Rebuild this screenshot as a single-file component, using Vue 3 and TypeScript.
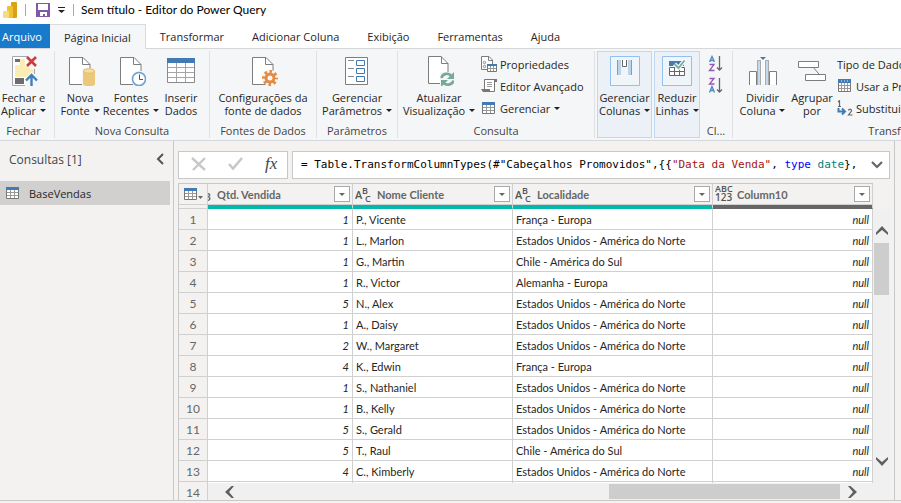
<script setup lang="ts">
import { ref } from 'vue'

interface Sale {
  qty: number
  client: string
  place: string
}

const tabs = ['Página Inicial', 'Transformar', 'Adicionar Coluna', 'Exibição', 'Ferramentas', 'Ajuda']
const activeTab = ref('Página Inicial')

const formula = [
  { text: '= Table.TransformColumnTypes(#"Cabeçalhos Promovidos",{{', kind: 'plain-code' },
  { text: '"Data da Venda"', kind: 'str' },
  { text: ', ', kind: 'plain-code' },
  { text: 'type', kind: 'kw' },
  { text: ' ', kind: 'plain-code' },
  { text: 'date', kind: 'ty' },
  { text: '},', kind: 'plain-code' },
]

const usa = 'Estados Unidos - América do Norte'
const sales: Sale[] = [
  { qty: 1, client: 'P., Vicente', place: 'França - Europa' },
  { qty: 1, client: 'L., Marlon', place: usa },
  { qty: 1, client: 'G., Martin', place: 'Chile - América do Sul' },
  { qty: 1, client: 'R., Victor', place: 'Alemanha - Europa' },
  { qty: 5, client: 'N., Alex', place: usa },
  { qty: 1, client: 'A., Daisy', place: usa },
  { qty: 2, client: 'W., Margaret', place: usa },
  { qty: 4, client: 'K., Edwin', place: 'França - Europa' },
  { qty: 1, client: 'S., Nathaniel', place: usa },
  { qty: 1, client: 'B., Kelly', place: usa },
  { qty: 5, client: 'S., Gerald', place: usa },
  { qty: 5, client: 'T., Raul', place: 'Chile - América do Sul' },
  { qty: 4, client: 'C., Kimberly', place: usa },
]

const columns = [
  { name: 'Qtd. Vendida', type: 'number' },
  { name: 'Nome Cliente', type: 'text' },
  { name: 'Localidade', type: 'text' },
  { name: 'Column10', type: 'any' },
]
</script>

<template>
  <div class="window">
    <header class="titlebar">
      <svg class="logo" width="18" height="18" viewBox="0 0 18 18" aria-hidden="true">
        <rect x="11" y="1" width="6" height="16" rx="1" fill="#d9a116" />
        <rect x="7" y="5" width="6" height="12" rx="1" fill="#efc32f" />
        <rect x="3" y="10" width="6" height="7" rx="1" fill="#f8dc7c" />
      </svg>
      <i class="bar"></i>
      <button class="plain save" aria-label="Salvar">
        <svg width="14" height="14" viewBox="0 0 14 14">
          <path d="M0 0H14V14H0Z" fill="#8357a8" />
          <path d="M2 1H12V7H2ZM4 9H11V13H9V11H7V13H4Z" fill="#fff" />
        </svg>
      </button>
      <button class="plain more" aria-label="Personalizar">
        <svg width="7" height="6" viewBox="0 0 7 6"><path d="M0 0H7V1H0ZM0 3H7L3.500 6Z" fill="#222" /></svg>
      </button>
      <i class="bar"></i>
      <h1>Sem título - Editor do Power Query</h1>
    </header>

    <nav class="tabs">
      <button class="file">Arquivo</button>
      <button
        v-for="tab in tabs"
        :key="tab"
        :class="{ active: tab === activeTab }"
        @click="activeTab = tab"
      >{{ tab }}</button>
    </nav>

    <section class="ribbon">
      <div class="group g-close">
        <div class="tools">
          <button class="big">
            <svg width="30" height="30" viewBox="0 0 30 30">
              <path d="M20 .5H4.500V29.500H17" fill="#fff" stroke="#a8a8a8" />
              <path d="M7 9H12V21H7ZM12 3H17V21H12Z" fill="#fbedb4" />
              <path d="M7 3H12V6H7ZM7 22H16V28H7Z" fill="#6d6d6d" />
              <path d="M17 10L26 14V21H17Z" fill="#fbedb4" />
              <path d="M26.500 13V18" stroke="#a8a8a8" />
              <path d="M19 1L28 10M28 1L19 10" stroke="#cf3a3a" stroke-width="2.600" />
              <path d="M23.500 30V20M18 24.500L23.500 19L29 24.500" fill="none" stroke="#f5f6f7" stroke-width="4.500" />
              <path d="M23.500 30V20M18 24.500L23.500 19L29 24.500" fill="none" stroke="#427fbd" stroke-width="2.400" />
            </svg>
            <span>Fechar e</span><span>Aplicar <b class="caret"></b></span>
          </button>
        </div>
        <p>Fechar</p>
      </div>

      <div class="group g-new">
        <div class="tools">
          <button class="big w46">
            <svg width="30" height="30" viewBox="0 0 30 30">
              <path d="M4.500 1.500H18L25 8.500V28.500H4.500Z" fill="#fff" stroke="#7d7d7d" />
              <path d="M17.500 1.500V8.500H25" fill="none" stroke="#7d7d7d" />
              <path d="M17 12H30V30H17Z" fill="#f5f6f7" />
              <path d="M18 15V28C18 31 30 31 30 28V15Z" fill="#ecc87a" />
              <ellipse cx="24" cy="15" rx="5.500" ry="2.300" fill="#f4dca6" stroke="#e7bd66" />
            </svg>
            <span>Nova</span><span>Fonte <b class="caret"></b></span>
          </button>
          <button class="big w56">
            <svg width="30" height="30" viewBox="0 0 30 30">
              <path d="M4.500 1.500H18L25 8.500V28.500H4.500Z" fill="#fff" stroke="#7d7d7d" />
              <path d="M17.500 1.500V8.500H25" fill="none" stroke="#7d7d7d" />
              <circle cx="23" cy="23" r="8.200" fill="#f5f6f7" />
              <circle cx="23" cy="23" r="6.500" fill="#fff" stroke="#6c9fd2" stroke-width="1.500" />
              <path d="M23.500 18.500V23.500H27" fill="none" stroke="#555" />
            </svg>
            <span>Fontes</span><span>Recentes <b class="caret"></b></span>
          </button>
          <button class="big w44">
            <svg width="30" height="30" viewBox="0 0 30 30">
              <path d="M1.500 2.500H28.500V26.500H1.500Z" fill="#fff" stroke="#8a8a8a" />
              <path d="M10.500 7V26M19.500 7V26M2 11.500H28M2 16.500H28M2 21.500H28" stroke="#a5a5a5" />
              <path d="M1 2H29V7H1Z" fill="#427ab5" />
            </svg>
            <span>Inserir</span><span>Dados</span>
          </button>
        </div>
        <p>Nova Consulta</p>
      </div>

      <div class="group g-source">
        <div class="tools">
          <button class="big">
            <svg width="30" height="30" viewBox="0 0 30 30">
              <path d="M4.500 1.500H18L25 8.500V28.500H4.500Z" fill="#fff" stroke="#7d7d7d" />
              <path d="M17.500 1.500V8.500H25" fill="none" stroke="#7d7d7d" />
              <circle cx="22" cy="22" r="8" fill="#f5f6f7" />
              <circle cx="22" cy="22" r="4" fill="none" stroke="#e58a42" stroke-width="3" />
              <circle cx="22" cy="22" r="6.500" fill="none" stroke="#e58a42" stroke-width="3" stroke-dasharray="2.500 2.605" stroke-dashoffset="1.250" />
            </svg>
            <span>Configurações da</span><span>fonte de dados</span>
          </button>
        </div>
        <p>Fontes de Dados</p>
      </div>

      <div class="group g-param">
        <div class="tools">
          <button class="big">
            <svg width="30" height="30" viewBox="0 0 30 30">
              <path d="M3.500 1.500H25.500V28.500H3.500Z" fill="#fff" stroke="#7d7d7d" />
              <path d="M6 4.500H12M6 12.500H12M6 20.500H12" stroke="#8a8a8a" />
              <path d="M14.500 4.500H22.500V9.500H14.500ZM14.500 12.500H22.500V17.500H14.500ZM14.500 20.500H22.500V25.500H14.500Z" fill="none" stroke="#427ab5" />
            </svg>
            <span>Gerenciar</span><span>Parâmetros <b class="caret"></b></span>
          </button>
        </div>
        <p>Parâmetros</p>
      </div>

      <div class="group g-query">
        <div class="tools">
          <button class="big w78">
            <svg width="30" height="30" viewBox="0 0 30 30">
              <path d="M4.500 .5H17L24 7.500V27.500H4.500Z" fill="#fff" stroke="#7d7d7d" />
              <path d="M17.500 .5V7.500H24" fill="none" stroke="#7d7d7d" />
              <path d="M16 16H30V30H16Z" fill="#f5f6f7" />
              <path d="M17.500 22C18.500 17 25 16.500 27.500 20.500M29.500 24.500C28.500 29.500 21.500 30 19 26" fill="none" stroke="#78a897" stroke-width="2.600" />
              <path d="M30 16V23H23ZM17 31V24H24Z" fill="#78a897" />
            </svg>
            <span>Atualizar</span><span>Visualização <b class="caret"></b></span>
          </button>
          <div class="stack">
            <button class="small">
              <svg width="16" height="16" viewBox="0 0 16 16">
                <path d="M.5 .5H8L11.500 4V13.500H.5Z" fill="#fff" stroke="#7d7d7d" />
                <path d="M7.500 .5V4.500H11" fill="none" stroke="#7d7d7d" />
                <circle cx="3.500" cy="6.500" r="1.200" fill="none" stroke="#888" /><circle cx="3.500" cy="10.500" r="1.200" fill="none" stroke="#888" />
                <path d="M6.500 8.500H15.500V15.500H6.500Z" fill="#fff" stroke="#777" />
                <path d="M9.500 10V15M12.500 10V15M7 12.500H15" stroke="#999" /><path d="M6 8H16V10H6Z" fill="#427ab5" />
              </svg>Propriedades
            </button>
            <button class="small">
              <svg width="16" height="16" viewBox="0 0 16 16">
                <path d="M3.500 11V1.500H13.500V13.500H7" fill="#fff" stroke="#777" />
                <path d="M13 1H16V4H13ZM0 11H9V14H2Z" fill="#777" /><path d="M6 4.500H11M6 6.500H11M6 8.500H11" stroke="#999" />
              </svg>Editor Avançado
            </button>
            <button class="small">
              <svg width="16" height="16" viewBox="0 0 16 16">
                <path d="M1.500 2.500H13.500V13.500H1.500Z" fill="#fff" stroke="#777" />
                <path d="M5.500 5V13M9.500 5V13M2 7.500H13M2 10.500H13" stroke="#999" /><path d="M1 2H14V5H1Z" fill="#427ab5" />
              </svg>Gerenciar <b class="caret"></b>
            </button>
          </div>
        </div>
        <p>Consulta</p>
      </div>

      <div class="group g-collapsed">
        <button class="big tile w55">
          <svg width="30" height="30" viewBox="0 0 30 30">
            <path d="M.5 .5H29.500V29.500H.5Z" fill="#f0f5fa" stroke="#92c0f0" />
            <path d="M7 4H11V19H7ZM18 4H22V19H18Z" fill="#bdd3ea" />
            <path d="M7.500 4V19M21.500 4V19" stroke="#999" /><path d="M12.500 4V10.500H16.500V4" fill="#fff" stroke="#666" />
          </svg>
          <span>Gerenciar</span><span>Colunas <b class="caret"></b></span>
        </button>
        <button class="big tile w46">
          <svg width="30" height="30" viewBox="0 0 30 30">
            <path d="M.5 .5H29.500V29.500H.5Z" fill="#f0f5fa" stroke="#92c0f0" />
            <path d="M7 5H22V10H7Z" fill="#427ab5" />
            <path d="M7.500 11.500H22.500V19.500H7.500ZM12.500 11V20M17.500 11V20M7 15.500H23" fill="#fff" stroke="#666" />
            <path d="M12.500 8L16.500 12L22.500 4.500" fill="none" stroke="#fff" stroke-width="4" />
            <path d="M12.500 8L16.500 12L22.500 4.500" fill="none" stroke="#78b09c" stroke-width="2" />
          </svg>
          <span>Reduzir</span><span>Linhas <b class="caret"></b></span>
        </button>
      </div>

      <div class="group g-sort">
        <div class="tools sorts">
          <button class="plain" aria-label="Classificar em ordem crescente">
            <svg width="16" height="18" viewBox="0 0 16 18">
              <path d="M1.500 7L4 1.500L6.500 7M2.500 5.500H5.500" fill="none" stroke="#4a86c2" stroke-width="1.300" />
              <path d="M1.500 9.500H6L1.500 15.500H6.500" fill="none" stroke="#9659b0" stroke-width="1.300" />
              <path d="M11.500 1V15M9 12.500L11.500 15L14 12.500" fill="none" stroke="#666" stroke-width="1.300" />
            </svg>
          </button>
          <button class="plain" aria-label="Classificar em ordem decrescente">
            <svg width="16" height="18" viewBox="0 0 16 18">
              <path d="M1.500 1.500H6L1.500 7H6.500" fill="none" stroke="#9659b0" stroke-width="1.300" />
              <path d="M1.500 15.500L4 9.500L6.500 15.500M2.500 13.500H5.500" fill="none" stroke="#4a86c2" stroke-width="1.300" />
              <path d="M11.500 1V15M9 12.500L11.500 15L14 12.500" fill="none" stroke="#666" stroke-width="1.300" />
            </svg>
          </button>
        </div>
        <p>Cl...</p>
      </div>

      <div class="group g-transform">
        <div class="tools">
          <button class="big w55">
            <svg width="30" height="30" viewBox="0 0 30 30">
              <path d="M1.500 29V15.500H8.500V29M21.500 29V15.500H28.500V29" fill="#fff" stroke="#7d7d7d" />
              <path d="M9 4H14V29H9ZM16 4H21V29H16Z" fill="#c5d9ed" />
              <path d="M13.500 4V29M16.500 4V29" stroke="#fff" />
              <path d="M9.500 29V4.500H12.500V29M17.500 29V4.500H20.500V29" fill="none" stroke="#a9a9a9" />
              <path d="M12 1H18L15 4Z" fill="#427ab5" />
            </svg>
            <span>Dividir</span><span>Coluna <b class="caret"></b></span>
          </button>
          <button class="big w44">
            <svg width="30" height="30" viewBox="0 0 30 30">
              <path d="M15 10L22 18" stroke="#7d7d7d" />
              <path d="M1.500 5.500H21.500V11.500H1.500ZM8.500 18.500H28.500V24.500H8.500Z" fill="#fff" stroke="#7d7d7d" />
            </svg>
            <span>Agrupar</span><span>por</span>
          </button>
          <div class="stack">
            <button class="small">Tipo de Dados: Texto <b class="caret"></b></button>
            <button class="small">
              <svg width="16" height="16" viewBox="0 0 16 16">
                <path d="M1.500 1.500H13.500V13.500H1.500Z" fill="#fff" stroke="#777" />
                <path d="M4.500 5V13M7.500 5V13M10.500 5V13M2 7.500H13M2 10.500H13" stroke="#999" />
                <path d="M1 1H14V5H1Z" fill="#427ab5" /><path d="M4.500 2V4M7.500 2V4M10.500 2V4" stroke="#8fb4d8" />
              </svg>Usar a Primeira Linha como Cabeçalho
            </button>
            <button class="small">
              <svg width="16" height="16" viewBox="0 0 16 16">
                <path d="M1 2L2.500 .7V6M1 6.500H4" fill="none" stroke="#666" stroke-width="1.200" />
                <path d="M1.500 8V11.500H7M5 8.500L8 11.500L5 14.500" fill="none" stroke="#427ab5" stroke-width="2" />
                <path d="M11.500 10.500C12 8.500 15 9 14.500 11L11.500 15H15.500" fill="none" stroke="#666" stroke-width="1.200" />
              </svg>Substituir Valores
            </button>
          </div>
        </div>
        <p>Transformar</p>
      </div>
    </section>

    <main class="workspace">
      <aside class="queries">
        <div class="queries-head">
          <h2>Consultas [1]</h2>
          <button class="plain" aria-label="Recolher">
            <svg width="8" height="12" viewBox="0 0 8 12"><path d="M7 1L2 6L7 11" fill="none" stroke="#555" stroke-width="2" /></svg>
          </button>
        </div>
        <button class="query">
          <svg width="13" height="12" viewBox="0 0 13 12">
            <path d="M.5 .5H12.500V11.500H.5Z" fill="#fff" stroke="#777" />
            <path d="M4.500 3V11M8.500 3V11M1 5.500H12M1 8.500H12" stroke="#999" /><path d="M0 0H13V3H0Z" fill="#427ab5" />
          </svg>BaseVendas
        </button>
      </aside>

      <section class="editor">
        <div class="formula">
          <div class="actions">
            <button class="plain" aria-label="Cancelar">
              <svg width="16" height="14" viewBox="0 0 16 14"><path d="M1 1L14 13M14 1L2 13" stroke="#c8c8c8" stroke-width="2.400" /></svg>
            </button>
            <button class="plain" aria-label="Confirmar">
              <svg width="16" height="14" viewBox="0 0 16 14"><path d="M1 7L5 11.500L14 1" fill="none" stroke="#c8c8c8" stroke-width="2.600" /></svg>
            </button>
            <button class="plain fx" aria-label="Inserir etapa">fx</button>
          </div>
          <div class="entry">
            <code contenteditable="true" role="textbox" aria-label="Fórmula"><span
              v-for="(token, i) in formula"
              :key="i"
              :class="token.kind"
            >{{ token.text }}</span></code>
            <button class="plain" aria-label="Expandir">
              <svg width="12" height="8" viewBox="0 0 12 8"><path d="M1 1L6 6L11 1" fill="none" stroke="#666" stroke-width="2.200" /></svg>
            </button>
          </div>
        </div>

        <div class="grid">
          <table>
            <colgroup>
              <col class="c-index" /><col class="c-qty" /><col class="c-client" /><col class="c-place" /><col class="c-any" />
            </colgroup>
            <thead>
              <tr>
                <th class="corner">
                  <button class="plain" aria-label="Opções da tabela">
                    <svg width="20" height="13" viewBox="0 0 20 13">
                      <path d="M.5 .5H12.500V11.500H.5Z" fill="#fff" stroke="#777" />
                      <path d="M4.500 3V11M8.500 3V11M1 5.500H12M1 8.500H12" stroke="#999" />
                      <path d="M0 0H13V3H0Z" fill="#427ab5" /><path d="M14 8H19L16.500 11Z" fill="#666" />
                    </svg>
                  </button>
                </th>
                <th v-for="col in columns" :key="col.name" :class="col.type">
                  <div class="head">
                    <span v-if="col.type === 'number'" class="cut">3</span>
                    <svg v-else-if="col.type === 'text'" class="type" width="18" height="20" viewBox="0 0 18 20">
                      <text x="0" y="15" class="t-large">A</text>
                      <text x="7" y="10" class="t-small">B</text>
                      <text x="10" y="18" class="t-small">C</text>
                    </svg>
                    <svg v-else class="type" width="18" height="20" viewBox="0 0 18 20">
                      <text x="0" y="8" class="t-small">ABC</text>
                      <text x="0" y="17" class="t-digits">123</text>
                    </svg>
                    <span class="name">{{ col.name }}</span>
                    <button class="filter" :aria-label="'Filtrar ' + col.name">
                      <svg width="6" height="3" viewBox="0 0 6 3"><path d="M0 0H6L3 3Z" fill="#666" /></svg>
                    </button>
                  </div>
                </th>
              </tr>
              <tr class="quality">
                <td></td><td v-for="col in columns" :key="col.name" :class="col.type"></td>
              </tr>
            </thead>
            <tbody>
              <tr v-for="(sale, i) in sales" :key="i">
                <th scope="row">{{ i + 1 }}</th>
                <td class="value">{{ sale.qty }}</td>
                <td>{{ sale.client }}</td>
                <td>{{ sale.place }}</td>
                <td class="value">null</td>
              </tr>
              <tr>
                <th scope="row">14</th><td></td><td></td><td></td><td></td>
              </tr>
            </tbody>
          </table>
          <div class="vscroll">
            <svg width="12" height="9" viewBox="0 0 12 9"><path d="M0 6.500L6 0L12 6.500V9L6 4L0 9Z" fill="#5f5f5f" /></svg>
            <div class="vthumb"></div>
            <svg width="12" height="9" viewBox="0 0 12 9"><path d="M0 2.500L6 9L12 2.500V0L6 5L0 0Z" fill="#5f5f5f" /></svg>
          </div>
          <div class="hscroll">
            <svg width="9" height="12" viewBox="0 0 9 12"><path d="M6.500 0L0 6L6.500 12H9L4 6L9 0Z" fill="#5f5f5f" /></svg>
            <div class="hthumb"></div>
            <svg width="9" height="12" viewBox="0 0 9 12"><path d="M2.500 0L9 6L2.500 12H0L5 6L0 0Z" fill="#5f5f5f" /></svg>
          </div>
        </div>
      </section>
      <div class="edge"></div>
    </main>
    <footer></footer>
  </div>
</template>

<style>
body {
  overflow: hidden;
}
</style>

<style scoped>
.window {
  display: flex;
  flex-direction: column;
  height: 100vh;
  background: #f3f2f1;
  color: #262626;
  font: 11px/13px 'Open Sans', 'Noto Sans', sans-serif;
}
svg {
  display: block;
  flex: none;
}
button {
  margin: 0;
  padding: 0;
  border: 0;
  background: none;
  color: inherit;
  font: inherit;
  white-space: nowrap;
}
h1, h2, p {
  margin: 0;
  font-weight: 400;
}
.plain {
  display: flex;
  align-items: center;
  justify-content: center;
}
.caret {
  display: inline-block;
  margin-left: 1px;
  border: 3px solid transparent;
  border-top-color: #222;
  border-bottom: 0;
  vertical-align: 3px;
}

.titlebar {
  display: flex;
  flex: none;
  align-items: center;
  height: 20px;
  padding-bottom: 4px;
  background: #fff;
}
.bar {
  width: 1px;
  height: 12px;
  margin: 0 10px 0 7px;
  background: #aaa;
}
.more {
  margin-left: 8px;
}
.titlebar .bar:last-of-type {
  margin: 0 7px 0 8px;
}
h1 {
  color: #000;
  font: 12px/16px Lato, 'Open Sans', sans-serif;
}

.tabs {
  display: flex;
  flex: none;
  height: 24px;
  background: #fff;
  border-bottom: 1px solid #d5d7d9;
}
.tabs button {
  padding: 0 14px;
}
.tabs .file {
  width: 50px;
  padding: 0 0 0 2px;
  background: #1979ca;
  color: #fff;
  text-align: left;
}
.tabs .active {
  height: 25px;
  background: #f5f6f7;
  border: 1px solid #d9dbdd;
  border-width: 1px 1px 0 0;
}

.ribbon {
  display: flex;
  flex: none;
  height: 87px;
  padding: 2px 0;
  overflow: hidden;
  background: #f5f6f7;
  border-bottom: 1px solid #d5d9dd;
}
.group {
  display: flex;
  flex: none;
  flex-direction: column;
  box-sizing: border-box;
  border-right: 1px solid #dfe1e3;
}
.group p {
  padding-bottom: 1px;
  color: #444;
  text-align: center;
}
.tools {
  display: flex;
  flex: 1;
  justify-content: center;
}
.g-close { width: 55px; padding-right: 7px; }
.g-new { width: 155px; }
.g-source { width: 107px; }
.g-param { width: 81px; }
.g-query { width: 197px; }
.g-sort { width: 33px; }
.g-transform { width: 336px; }
.g-new .tools, .g-query .tools, .g-transform .tools {
  justify-content: flex-start;
  padding-left: 2px;
}
.g-collapsed {
  flex-direction: row;
  gap: 2px;
  padding: 0 0 0 2px;
  border: 0;
}
.big {
  display: flex;
  flex-direction: column;
  align-items: center;
  padding-top: 5px;
}
.big svg {
  margin-bottom: 5px;
}
.w44 { width: 44px; }
.w46 { width: 46px; }
.w55 { width: 55px; }
.w56 { width: 56px; }
.w78 { width: 78px; }
.tile {
  padding-top: 4px;
  background: #ebf1f7;
  border: 1px solid #bfd9f3;
}
.stack {
  display: flex;
  flex-direction: column;
  gap: 6px;
  padding: 5px 0 0 3px;
}
.small {
  display: flex;
  align-items: center;
  gap: 3px;
  height: 16px;
}
.sorts {
  flex-direction: column;
  align-items: center;
  justify-content: flex-start;
  gap: 4px;
  padding-top: 4px;
}

.workspace {
  display: flex;
  flex: 1;
  min-height: 0;
}
.queries {
  flex: none;
  width: 173px;
  border-right: 1px solid #c8c8c8;
}
.queries-head {
  display: flex;
  align-items: center;
  justify-content: space-between;
  height: 40px;
  padding: 0 9px 4px;
  box-sizing: border-box;
}
h2 {
  color: #444;
  font-size: 12px;
}
.query {
  display: flex;
  align-items: center;
  gap: 10px;
  width: calc(100% - 3px);
  height: 24px;
  padding-left: 6px;
  background: #d2d0ce;
}
.editor {
  display: flex;
  flex: 1;
  flex-direction: column;
  min-width: 0;
  padding: 10px 4px 0;
}
.formula {
  display: flex;
  flex: none;
  gap: 4px;
  height: 28px;
  margin-bottom: 4px;
}
.actions, .entry {
  display: flex;
  align-items: center;
  box-sizing: border-box;
  background: #fff;
  border: 1px solid #c8c8c8;
}
.actions {
  flex: none;
  gap: 21px;
  width: 110px;
  padding: 0 0 2px 12px;
}
.fx {
  color: #444;
  font: italic 17px/20px 'Liberation Serif', serif;
}
.entry {
  flex: 1;
  min-width: 0;
  gap: 8px;
  padding: 0 6px 0 8px;
}
code {
  flex: 1;
  overflow: hidden;
  color: #000;
  font: 11px/16px 'DejaVu Sans Mono', monospace;
  white-space: pre;
  outline: 0;
}
.str { color: #a31515; }
.kw { color: #0000ff; }
.ty { color: #008080; }

.grid {
  position: relative;
  flex: 1;
  min-height: 0;
  overflow: hidden;
}
table {
  width: 695px;
  table-layout: fixed;
  border-spacing: 0;
  border-top: 1px solid #c8c8c8;
  border-left: 1px solid #c8c8c8;
  font-family: Lato, 'Open Sans', sans-serif;
}
.c-index { width: 29px; }
.c-qty { width: 145px; }
.c-client, .c-any { width: 160px; }
.c-place { width: 200px; }
th, td {
  height: 20px;
  padding: 0 3px;
  overflow: hidden;
  border: 1px solid #d0d0d0;
  border-width: 0 1px 1px 0;
  white-space: nowrap;
}
td {
  background: #fff;
  text-align: left;
}
th {
  background: #f3f2f1;
  color: #666;
  font-weight: 400;
}
.value {
  font-style: italic;
  text-align: right;
}
tbody th {
  font-size: 12px;
}
thead th {
  padding: 0;
}
thead th.corner {
  padding-left: 5px;
}
.head {
  display: flex;
  align-items: center;
  height: 20px;
  padding-right: 2px;
}
.name {
  flex: 1;
  font-weight: 700;
  text-align: left;
}
.filter {
  display: flex;
  align-items: center;
  justify-content: center;
  box-sizing: border-box;
  width: 16px;
  height: 16px;
  background: #fff;
  border: 1px solid #aaa;
}
.type {
  margin: 0 4px 0 2px;
  fill: #555;
  font-family: 'Open Sans', sans-serif;
  font-weight: 600;
}
.t-large { font-size: 11px; }
.t-small { font-size: 9px; }
.t-digits { font-size: 10px; }
.cut {
  display: flex;
  flex: none;
  justify-content: flex-end;
  width: 3px;
  padding-top: 4px;
  margin-right: 6px;
  overflow: hidden;
  font-weight: 700;
}
.quality td {
  height: 3px;
  padding: 0;
  background: #f3f2f1;
  line-height: 0;
}
.quality .number, .quality .text, .quality .any {
  background: #01b8aa;
  border-bottom-color: #01b8aa;
}
.quality .any {
  background: #666;
  border-bottom-color: #666;
}
.vscroll {
  position: absolute;
  top: 26px;
  bottom: 17px;
  left: 695px;
  display: flex;
  flex-direction: column;
  align-items: center;
  box-sizing: border-box;
  width: 17px;
  padding: 17px 0;
  background: #f0f0f0;
}
.vthumb {
  width: 15px;
  height: 52px;
  margin: 8px 0 auto;
  background: #cdcdcd;
}
.hscroll {
  position: absolute;
  bottom: 0;
  left: 30px;
  display: flex;
  align-items: center;
  box-sizing: border-box;
  width: 682px;
  height: 17px;
  padding: 0 33px 0 17px;
  background: #f0f0f0;
}
.hthumb {
  width: 231px;
  height: 15px;
  margin: 0 8px 0 auto;
  background: #cdcdcd;
}
.edge {
  width: 6px;
  border-left: 1px solid #c8c8c8;
}
footer {
  flex: none;
  height: 2px;
  border-top: 1px solid #c8c8c8;
}
</style>
